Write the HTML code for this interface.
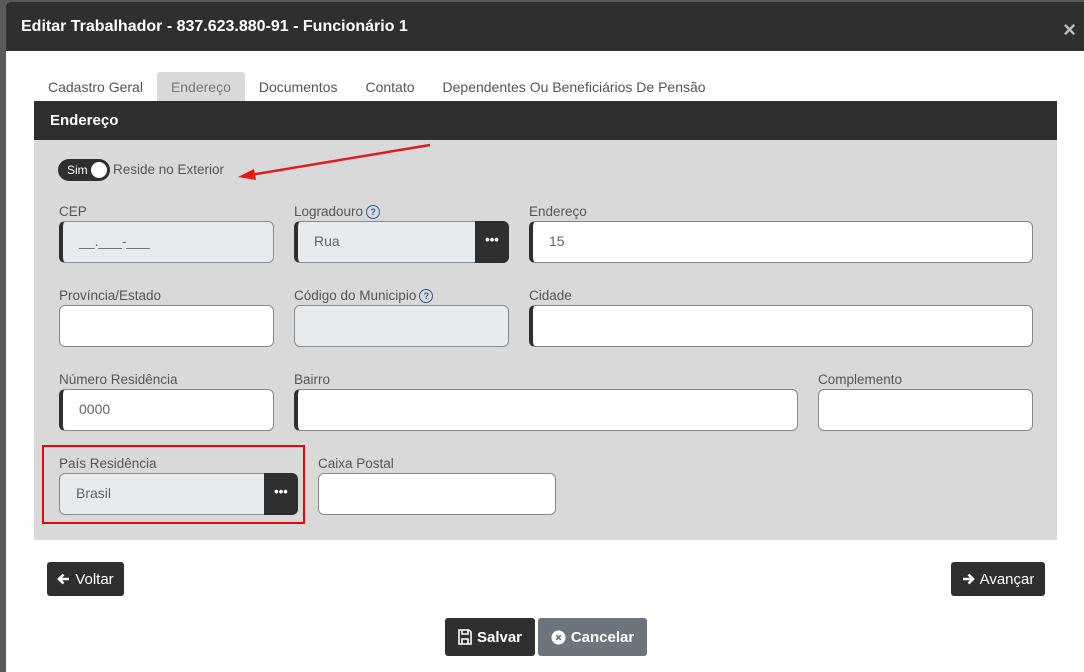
<html><head><style>
body{margin:0;width:1084px;height:668px;background:#5a5a5a;font-family:"Liberation Sans",sans-serif;position:relative;overflow:hidden}
.modal{position:absolute;left:6px;top:2px;width:1078px;height:670px;background:#fff;border-radius:4px 0 0 0}
.hdr{height:49px;background:#2f2f2f;color:#fff;font-weight:bold;font-size:16px;line-height:49px;padding-left:15px;border-radius:4px 0 0 0}
.x{position:absolute;right:8px;top:0;color:#bbb;font-size:22px;line-height:55px;font-weight:bold}
.tabs{position:absolute;top:70px;left:28px;height:29px;font-size:14px;color:#555}
.tab{display:inline-block;padding:0 14px;line-height:30px;height:29px}
.tab.a{background:#d9d9d9;color:#777;border-radius:3px 3px 0 0}
.ph{position:absolute;left:28px;top:99px;width:1023px;height:39px;background:#2f2f2f;color:#fff;font-weight:bold;font-size:15px;line-height:39px;padding-left:16px;box-sizing:border-box}
.pb{position:absolute;left:28px;top:138px;width:1023px;height:400px;background:#d9d9d9}
.lbl{position:absolute;font-size:13.5px;color:#555}
.in{position:absolute;height:40px;box-sizing:border-box;border:1px solid #888;border-radius:6px;background:#fff;font-size:14px;color:#666;line-height:38px;padding-left:16px}
.dk{border-left:4px solid #2f2f2f}
.g{background:#e8ebee}
.btn3{position:absolute;width:34px;height:42px;background:#2f2f2f;border-radius:0 6px 6px 0;color:#fff;text-align:center;line-height:38px;font-weight:bold;font-size:13px}
.q{display:inline-block;width:12px;height:12px;border:1.5px solid #2a5a9a;border-radius:50%;font-size:9px;color:#2a5a9a;text-align:center;line-height:12px;font-weight:bold;vertical-align:1px;margin-left:3px}
.b{position:absolute;background:#2f2f2f;color:#fff;font-size:15px;font-weight:bold;border-radius:3px;text-align:center;display:flex;align-items:center;justify-content:center;gap:5px}
</style></head><body>
<div class="modal">
<div class="hdr">Editar Trabalhador - 837.623.880-91 - Funcionário 1</div>
<div class="x">×</div>
<div class="tabs"><span class="tab">Cadastro Geral</span><span class="tab a">Endereço</span><span class="tab">Documentos</span><span class="tab">Contato</span><span class="tab">Dependentes Ou Beneficiários De Pensão</span></div>
<div class="ph">Endereço</div>
<div class="pb"></div>
</div>
<div style="position:absolute;left:58px;top:159px;width:52px;height:22px;background:#2f2f2f;border-radius:11px;color:#fff;font-size:12px;line-height:22px;padding-left:9px;box-sizing:border-box">Sim<span style="position:absolute;right:3px;top:3px;width:16px;height:16px;background:#fff;border-radius:50%"></span></div>
<div class="lbl" style="left:113px;top:162px">Reside no Exterior</div>
<svg style="position:absolute;left:230px;top:140px" width="205" height="45"><line x1="200" y1="5" x2="20" y2="35" stroke="#e21a1a" stroke-width="2.5"/><polygon points="8,37 24,29 26,40" fill="#e21a1a"/></svg>

<div class="lbl" style="left:59px;top:204px">CEP</div>
<div class="in dk g" style="left:59px;top:221px;width:215px;height:42px">__.___-___</div>
<div class="lbl" style="left:294px;top:204px">Logradouro<span class="q">?</span></div>
<div class="in dk g" style="left:294px;top:221px;width:185px;height:42px;border-radius:6px 0 0 6px">Rua</div>
<div class="btn3" style="left:475px;top:221px">•••</div>
<div class="lbl" style="left:529px;top:204px">Endereço</div>
<div class="in dk" style="left:529px;top:221px;width:504px;height:42px">15</div>

<div class="lbl" style="left:59px;top:288px">Província/Estado</div>
<div class="in" style="left:59px;top:305px;width:215px;height:42px"></div>
<div class="lbl" style="left:294px;top:288px">Código do Municipio<span class="q">?</span></div>
<div class="in g" style="left:294px;top:305px;width:215px;height:42px"></div>
<div class="lbl" style="left:529px;top:288px">Cidade</div>
<div class="in dk" style="left:529px;top:305px;width:504px;height:42px"></div>

<div class="lbl" style="left:59px;top:372px">Número Residência</div>
<div class="in dk" style="left:59px;top:389px;width:215px;height:42px">0000</div>
<div class="lbl" style="left:294px;top:372px">Bairro</div>
<div class="in dk" style="left:294px;top:389px;width:504px;height:42px"></div>
<div class="lbl" style="left:818px;top:372px">Complemento</div>
<div class="in" style="left:818px;top:389px;width:215px;height:42px"></div>

<div style="position:absolute;left:42px;top:445px;width:263px;height:79px;border:2px solid #e00;box-sizing:border-box"></div>
<div class="lbl" style="left:59px;top:456px">País Residência</div>
<div class="in g" style="left:59px;top:473px;width:210px;height:42px;border-radius:6px 0 0 6px">Brasil</div>
<div class="btn3" style="left:264px;top:473px">•••</div>
<div class="lbl" style="left:318px;top:456px">Caixa Postal</div>
<div class="in" style="left:318px;top:473px;width:238px;height:42px"></div>

<div class="b" style="left:47px;top:562px;width:77px;height:34px;font-weight:normal"><svg width="13" height="12" viewBox="0 0 13 12"><path d="M12 6H2M6.5 1.5L2 6l4.5 4.5" stroke="#fff" stroke-width="2.6" fill="none"/></svg>Voltar</div>
<div class="b" style="left:951px;top:562px;width:94px;height:34px;font-weight:normal"><svg width="13" height="12" viewBox="0 0 13 12"><path d="M1 6h10M6.5 1.5L11 6l-4.5 4.5" stroke="#fff" stroke-width="2.6" fill="none"/></svg>Avançar</div>
<div class="b" style="left:445px;top:618px;width:90px;height:38px"><svg width="14" height="16" viewBox="0 0 14 16"><path d="M1 1h10l2 2v12H1z M4 1v4h6V1 M4 15v-5h6v5" stroke="#fff" stroke-width="1.6" fill="none"/></svg>Salvar</div>
<div class="b" style="left:538px;top:618px;width:109px;height:38px;background:#6c757d"><svg width="15" height="15" viewBox="0 0 16 16"><circle cx="8" cy="8" r="7.5" fill="#fff"/><path d="M5.5 5.5l5 5M10.5 5.5l-5 5" stroke="#6c757d" stroke-width="1.8"/></svg>Cancelar</div>
</body></html>
